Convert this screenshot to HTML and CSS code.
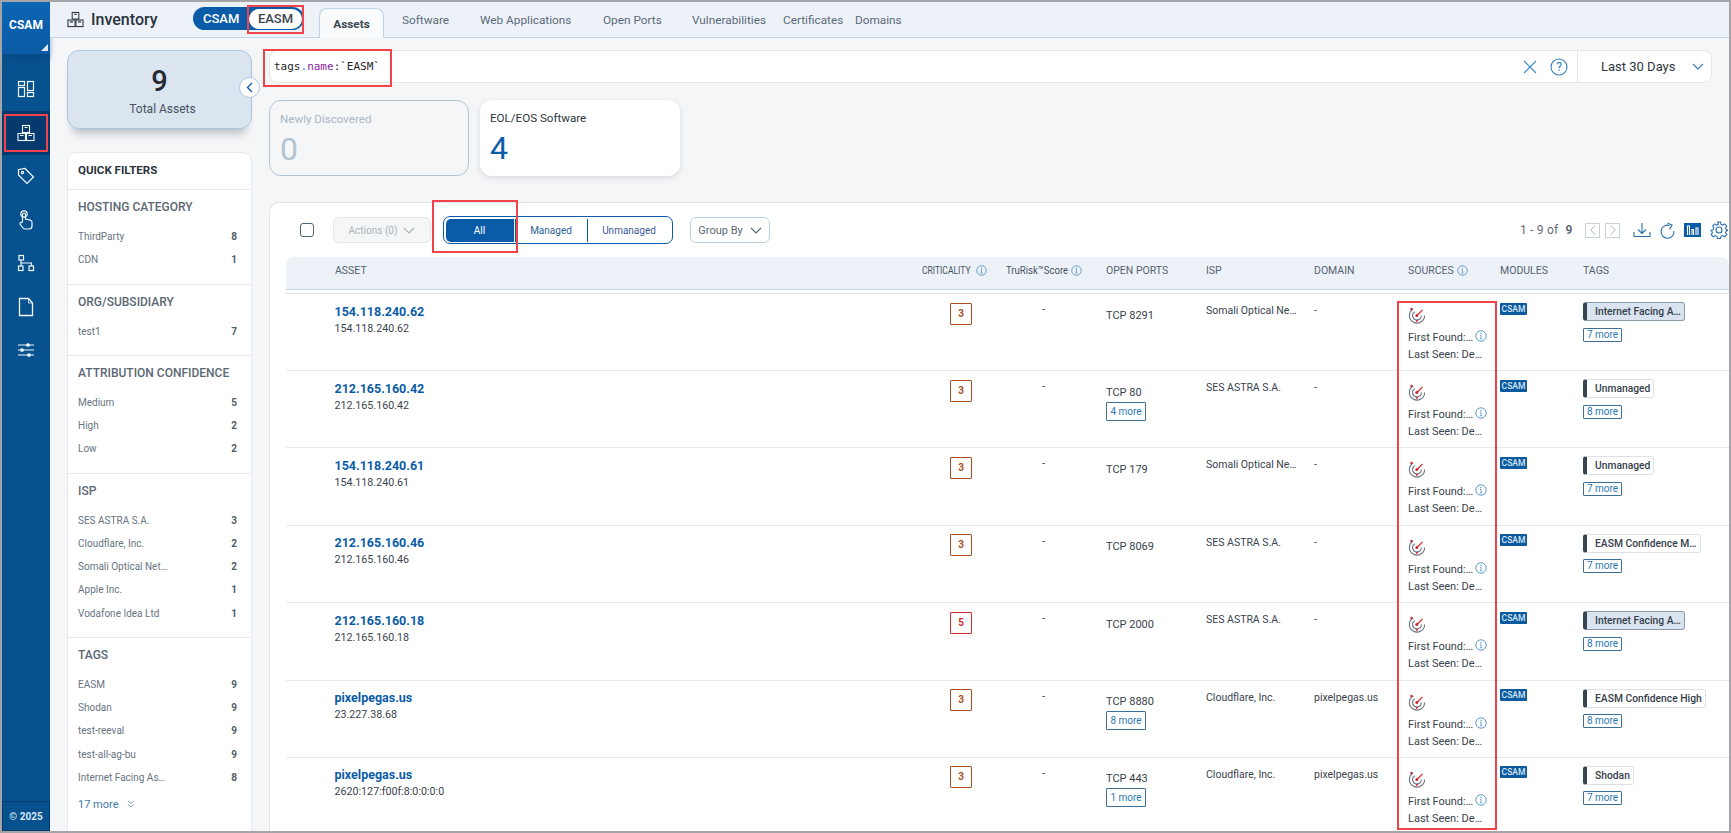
FILE: index.html
```html
<!DOCTYPE html>
<html lang="en">
<head>
<meta charset="utf-8">
<title>Inventory</title>
<link rel="stylesheet" href="styles.css">
</head>
<body>
<svg class="defs" width="0" height="0" aria-hidden="true">
  <symbol id="i-inv" viewBox="0 0 18 18"><g fill="none" stroke="currentColor" stroke-width="1.1"><rect x="5.5" y="1.5" width="7" height="7"/><rect x="1" y="9.5" width="7.5" height="7"/><rect x="9.5" y="9.5" width="7.5" height="7"/><path d="M7.5 3.5h3M3 11.5h3.500M11.500 11.500H15" /></g></symbol>
  <symbol id="i-radar" viewBox="0 0 18 18"><g fill="none" stroke="#6d7680" stroke-width="1.100"><path d="M5.200 2.900A7.600 7.600 0 1 0 16.600 9.500"/><path d="M6.800 5.700A4.400 4.400 0 1 0 13.400 9.500"/></g><path d="M9 9.500 14.500 3.800" stroke="#d8262c" stroke-width="1.200"/><circle cx="8.800" cy="9.500" r="1.500" fill="#d8262c"/><circle cx="3.500" cy="3" r="1.200" fill="#d8262c"/><circle cx="8.800" cy="14.800" r="1.100" fill="#d8262c"/></symbol>
  <symbol id="i-info" viewBox="0 0 12 12"><circle cx="6" cy="6" r="5.200" fill="none" stroke="currentColor"/><path d="M6 5.200v3.400M4.800 8.800h2.400M5 5.200h1" fill="none" stroke="currentColor" stroke-width=".9"/><circle cx="6" cy="3.400" r=".7" fill="currentColor"/></symbol>
  <symbol id="i-down" viewBox="0 0 12 7"><path d="M1 1l5 5 5-5" fill="none" stroke="currentColor" stroke-width="1.100"/></symbol>
</svg>

<div class="app">
  <nav class="rail">
    <div class="brand">CSAM<span class="brand-corner"></span></div>
    <div class="rail-icons">
      <a class="rail-item"><svg width="18" height="18" viewBox="0 0 18 18" fill="none" stroke="currentColor" stroke-width="1.200"><rect x="1.500" y="1.500" width="6" height="4"/><rect x="1.500" y="7.500" width="6" height="9"/><rect x="10.500" y="1.500" width="6" height="9"/><rect x="10.500" y="12.500" width="6" height="4"/></svg></a>
      <a class="rail-item active"><svg width="18" height="18"><use href="#i-inv"/></svg></a>
      <a class="rail-item"><svg width="18" height="18" viewBox="0 0 18 18" fill="none" stroke="currentColor" stroke-width="1.200"><path d="M1.500 2.500 8 1.500 16.500 10 10 16.500 1.500 8Z"/><circle cx="5.500" cy="5.500" r="1.100"/></svg></a>
      <a class="rail-item"><svg width="18" height="20" viewBox="0 0 18 20" fill="none" stroke="currentColor" stroke-width="1.200"><circle cx="7" cy="4" r="3.200"/><path d="M5.500 11V4.500a1.500 1.500 0 0 1 3 0V9l5 1.200c1 .3 1.500 1 1.500 2V16a3 3 0 0 1-3 3H8a3 3 0 0 1-2.500-1.500L3 14c-.6-1 .8-2.300 1.800-1.300Z"/></svg></a>
      <a class="rail-item"><svg width="18" height="18" viewBox="0 0 18 18" fill="none" stroke="currentColor" stroke-width="1.200"><rect x="2" y="1.500" width="4.500" height="4.500"/><rect x="1.500" y="12" width="4.500" height="4.500"/><rect x="12" y="12" width="4.500" height="4.500"/><path d="M4 6v6M4 9h10.500v3"/></svg></a>
      <a class="rail-item"><svg width="18" height="20" viewBox="0 0 18 20" fill="none" stroke="currentColor" stroke-width="1.300"><path d="M2.500 1.500h9l4 4.500v12.500h-13Z"/><path d="M11.500 1.500V6h4" stroke-width=".8"/></svg></a>
      <a class="rail-item"><svg width="18" height="16" viewBox="0 0 18 16" fill="none" stroke="currentColor" stroke-width="1.100"><path d="M1 3h16M1 8h16M1 13h16"/><circle cx="11" cy="3" r="1.300" fill="currentColor"/><circle cx="5" cy="8" r="1.300" fill="currentColor"/><circle cx="12" cy="13" r="1.300" fill="currentColor"/></svg></a>
    </div>
    <div class="rail-foot">© 2025</div>
  </nav>

  <div class="main">
    <header class="topbar">
      <div class="title"><svg width="17" height="17"><use href="#i-inv"/></svg><span>Inventory</span></div>
      <div class="switch"><span class="switch-on">CSAM</span><span class="switch-off">EASM</span></div>
      <div class="tabs">
        <a class="tab tab-active">Assets</a>
        <a class="tab t-soft">Software</a>
        <a class="tab t-web">Web Applications</a>
        <a class="tab t-ports">Open Ports</a>
        <a class="tab t-vuln">Vulnerabilities</a>
        <a class="tab t-cert">Certificates</a>
        <a class="tab t-dom">Domains</a>
      </div>
    </header>

    <div class="content">
      <aside class="side">
        <div class="total">
          <div class="total-num">9</div>
          <div class="total-label">Total Assets</div>
          <button class="collapse"><svg width="7" height="11" viewBox="0 0 7 11"><path d="M6 1 1.500 5.500 6 10" fill="none" stroke="#0b5ca8" stroke-width="1.400"/></svg></button>
        </div>
        <div class="filters">
          <div class="filters-title">QUICK FILTERS</div>
          <section class="fsec">
            <h3>HOSTING CATEGORY</h3>
            <div class="fitem"><span>ThirdParty</span><b>8</b></div>
            <div class="fitem"><span>CDN</span><b>1</b></div>
          </section>
          <section class="fsec">
            <h3>ORG/SUBSIDIARY</h3>
            <div class="fitem"><span>test1</span><b>7</b></div>
          </section>
          <section class="fsec">
            <h3>ATTRIBUTION CONFIDENCE</h3>
            <div class="fitem"><span>Medium</span><b>5</b></div>
            <div class="fitem"><span>High</span><b>2</b></div>
            <div class="fitem"><span>Low</span><b>2</b></div>
          </section>
          <section class="fsec">
            <h3>ISP</h3>
            <div class="fitem"><span>SES ASTRA S.A.</span><b>3</b></div>
            <div class="fitem"><span>Cloudflare, Inc.</span><b>2</b></div>
            <div class="fitem"><span>Somali Optical Net…</span><b>2</b></div>
            <div class="fitem"><span>Apple Inc.</span><b>1</b></div>
            <div class="fitem"><span>Vodafone Idea Ltd</span><b>1</b></div>
          </section>
          <section class="fsec">
            <h3>TAGS</h3>
            <div class="fitem"><span>EASM</span><b>9</b></div>
            <div class="fitem"><span>Shodan</span><b>9</b></div>
            <div class="fitem"><span>test-reeval</span><b>9</b></div>
            <div class="fitem"><span>test-all-ag-bu</span><b>9</b></div>
            <div class="fitem"><span>Internet Facing As…</span><b>8</b></div>
            <div class="fmore">17 more <svg width="8" height="8" viewBox="0 0 8 8"><path d="M1 1l3 2.500L7 1M1 4.500 4 7l3-2.500" fill="none" stroke="#5d87ad" stroke-width=".8"/></svg></div>
          </section>
        </div>
      </aside>

      <div class="work">
        <div class="search">
          <div class="query">tags<i class="q-dot">.</i><i class="q-key">name</i>:`EASM`</div>
          <svg class="q-x" width="14" height="14" viewBox="0 0 14 14"><path d="M1 1l12 12M13 1 1 13" stroke="#3d8ac6" stroke-width="1.100"/></svg>
          <svg class="q-help" width="18" height="18" viewBox="0 0 18 18"><circle cx="9" cy="9" r="8" fill="none" stroke="#2f7dbd" stroke-width="1.100"/><text x="9" y="13" text-anchor="middle" class="q-mark">?</text></svg>
          <div class="range"><span>Last 30 Days</span><svg width="12" height="7" class="range-c"><use href="#i-down"/></svg></div>
        </div>

        <div class="stats">
          <div class="stat stat-off"><div class="stat-label">Newly Discovered</div><div class="stat-num">0</div></div>
          <div class="stat stat-on"><div class="stat-label">EOL/EOS Software</div><div class="stat-num">4</div></div>
        </div>

        <div class="panel">
          <div class="toolbar">
            <span class="check"></span>
            <span class="actions">Actions (0) <svg width="12" height="7"><use href="#i-down"/></svg></span>
            <div class="seg"><span class="seg-a">All</span><span class="seg-m">Managed</span><span class="seg-u">Unmanaged</span></div>
            <span class="group">Group By <svg width="12" height="7"><use href="#i-down"/></svg></span>
            <div class="pager">
              <span class="pg-text">1 - 9 of <b>9</b></span>
              <span class="pg-btn"><svg width="6" height="10" viewBox="0 0 6 10"><path d="M5 .5.800 5 5 9.500" fill="none" stroke="#a9b6c2"/></svg></span>
              <span class="pg-btn"><svg width="6" height="10" viewBox="0 0 6 10"><path d="M1 .5 5.200 5 1 9.500" fill="none" stroke="#a9b6c2"/></svg></span>
              <svg class="pg-dl" width="18" height="16" viewBox="0 0 18 16" fill="none" stroke="#2c6fae" stroke-width="1.100"><path d="M9 1v10M5 7.500 9 11.500l4-4M1 10v4.500h16V10"/></svg>
              <svg class="pg-re" width="17" height="17" viewBox="0 0 17 17" fill="none" stroke="#2c6fae" stroke-width="1.100"><path d="M10.500 3.500A6.500 6.500 0 1 0 15 9"/><path d="M8.500 1 13 3.200 10.500 7.500"/></svg>
              <span class="pg-chart"><svg width="13" height="10" viewBox="0 0 13 10" fill="none" stroke="#fff" stroke-width="1.100"><path d="M1.500 10V1h2v9M6 10V4.500h1.500V10M10 10V3h2v7"/></svg></span>
              <svg class="pg-gear" width="18" height="18" viewBox="0 0 18 18" fill="none" stroke="#2c6fae" stroke-width="1.100"><circle cx="9" cy="9" r="3"/><path d="M7.500 1h3l.5 2.300 1.800.8 2-1.200 2 2.100-1.200 2 .7 1.800 2.200.5v0l-2.200.6-.7 1.800 1.200 2-2 2-2-1.200-1.800.8-.5 2.200h-3l-.5-2.200-1.800-.8-2 1.200-2-2 1.200-2-.7-1.800L1 9.300v0l2.200-.5.700-1.800-1.200-2 2-2.100 2 1.200 1.800-.8Z"/></svg>
            </div>
          </div>

          <div class="thead grid">
            <div class="h h-asset">ASSET</div>
            <div class="h h-crit"><span class="narrow nw-crit">CRITICALITY</span><svg width="11" height="11"><use href="#i-info"/></svg></div>
            <div class="h h-tru"><span class="narrow nw-tru">TruRisk™Score</span><svg width="11" height="11"><use href="#i-info"/></svg></div>
            <div class="h">OPEN PORTS</div>
            <div class="h">ISP</div>
            <div class="h">DOMAIN</div>
            <div class="h">SOURCES <svg width="11" height="11"><use href="#i-info"/></svg></div>
            <div class="h">MODULES</div>
            <div class="h">TAGS</div>
          </div>
          <div class="thead-rule"></div>

          <div class="rows">
            <div class="row grid">
              <div class="c-asset"><a class="name">154.118.240.62</a><div class="ip">154.118.240.62</div></div>
              <div class="c-crit"><span class="sev">3</span></div>
              <div class="c-dash">-</div>
              <div class="c-port"><div>TCP 8291</div></div>
              <div class="c-text">Somali Optical Ne…</div>
              <div class="c-text">-</div>
              <div class="c-src"><svg width="18" height="18"><use href="#i-radar"/></svg><div class="src-l">First Found:… <svg width="12" height="12"><use href="#i-info"/></svg></div><div class="src-l">Last Seen: De…</div></div>
              <div class="c-mod"><span class="mod">CSAM</span></div>
              <div class="c-tag"><span class="chip chip-fill">Internet Facing A…</span><span class="more">7 more</span></div>
            </div>
            <div class="row grid">
              <div class="c-asset"><a class="name">212.165.160.42</a><div class="ip">212.165.160.42</div></div>
              <div class="c-crit"><span class="sev">3</span></div>
              <div class="c-dash">-</div>
              <div class="c-port"><div>TCP 80</div><span class="more">4 more</span></div>
              <div class="c-text">SES ASTRA S.A.</div>
              <div class="c-text">-</div>
              <div class="c-src"><svg width="18" height="18"><use href="#i-radar"/></svg><div class="src-l">First Found:… <svg width="12" height="12"><use href="#i-info"/></svg></div><div class="src-l">Last Seen: De…</div></div>
              <div class="c-mod"><span class="mod">CSAM</span></div>
              <div class="c-tag"><span class="chip">Unmanaged</span><span class="more">8 more</span></div>
            </div>
            <div class="row grid">
              <div class="c-asset"><a class="name">154.118.240.61</a><div class="ip">154.118.240.61</div></div>
              <div class="c-crit"><span class="sev">3</span></div>
              <div class="c-dash">-</div>
              <div class="c-port"><div>TCP 179</div></div>
              <div class="c-text">Somali Optical Ne…</div>
              <div class="c-text">-</div>
              <div class="c-src"><svg width="18" height="18"><use href="#i-radar"/></svg><div class="src-l">First Found:… <svg width="12" height="12"><use href="#i-info"/></svg></div><div class="src-l">Last Seen: De…</div></div>
              <div class="c-mod"><span class="mod">CSAM</span></div>
              <div class="c-tag"><span class="chip">Unmanaged</span><span class="more">7 more</span></div>
            </div>
            <div class="row grid">
              <div class="c-asset"><a class="name">212.165.160.46</a><div class="ip">212.165.160.46</div></div>
              <div class="c-crit"><span class="sev">3</span></div>
              <div class="c-dash">-</div>
              <div class="c-port"><div>TCP 8069</div></div>
              <div class="c-text">SES ASTRA S.A.</div>
              <div class="c-text">-</div>
              <div class="c-src"><svg width="18" height="18"><use href="#i-radar"/></svg><div class="src-l">First Found:… <svg width="12" height="12"><use href="#i-info"/></svg></div><div class="src-l">Last Seen: De…</div></div>
              <div class="c-mod"><span class="mod">CSAM</span></div>
              <div class="c-tag"><span class="chip">EASM Confidence M…</span><span class="more">7 more</span></div>
            </div>
            <div class="row grid">
              <div class="c-asset"><a class="name">212.165.160.18</a><div class="ip">212.165.160.18</div></div>
              <div class="c-crit"><span class="sev sev-high">5</span></div>
              <div class="c-dash">-</div>
              <div class="c-port"><div>TCP 2000</div></div>
              <div class="c-text">SES ASTRA S.A.</div>
              <div class="c-text">-</div>
              <div class="c-src"><svg width="18" height="18"><use href="#i-radar"/></svg><div class="src-l">First Found:… <svg width="12" height="12"><use href="#i-info"/></svg></div><div class="src-l">Last Seen: De…</div></div>
              <div class="c-mod"><span class="mod">CSAM</span></div>
              <div class="c-tag"><span class="chip chip-fill">Internet Facing A…</span><span class="more">8 more</span></div>
            </div>
            <div class="row grid">
              <div class="c-asset"><a class="name">pixelpegas.us</a><div class="ip">23.227.38.68</div></div>
              <div class="c-crit"><span class="sev">3</span></div>
              <div class="c-dash">-</div>
              <div class="c-port"><div>TCP 8880</div><span class="more">8 more</span></div>
              <div class="c-text">Cloudflare, Inc.</div>
              <div class="c-text">pixelpegas.us</div>
              <div class="c-src"><svg width="18" height="18"><use href="#i-radar"/></svg><div class="src-l">First Found:… <svg width="12" height="12"><use href="#i-info"/></svg></div><div class="src-l">Last Seen: De…</div></div>
              <div class="c-mod"><span class="mod">CSAM</span></div>
              <div class="c-tag"><span class="chip">EASM Confidence High</span><span class="more">8 more</span></div>
            </div>
            <div class="row grid">
              <div class="c-asset"><a class="name">pixelpegas.us</a><div class="ip">2620:127:f00f:8:0:0:0:0</div></div>
              <div class="c-crit"><span class="sev">3</span></div>
              <div class="c-dash">-</div>
              <div class="c-port"><div>TCP 443</div><span class="more">1 more</span></div>
              <div class="c-text">Cloudflare, Inc.</div>
              <div class="c-text">pixelpegas.us</div>
              <div class="c-src"><svg width="18" height="18"><use href="#i-radar"/></svg><div class="src-l">First Found:… <svg width="12" height="12"><use href="#i-info"/></svg></div><div class="src-l">Last Seen: De…</div></div>
              <div class="c-mod"><span class="mod">CSAM</span></div>
              <div class="c-tag"><span class="chip">Shodan</span><span class="more">7 more</span></div>
            </div>
          </div>
        </div>
      </div>
    </div>
  </div>
</div>

<div class="mark m-easm"></div>
<div class="mark m-query"></div>
<div class="mark m-nav"></div>
<div class="mark m-all"></div>
<div class="mark m-src"></div>
</body>
</html>
```

FILE: styles.css
```css
* { box-sizing: border-box; }
html, body { margin: 0; height: 100%; overflow: hidden; }
body { position: relative; font-family: Roboto, "Liberation Sans", sans-serif; color: #2b3640; background: #fff; }
.defs { position: absolute; }
a { color: inherit; text-decoration: none; }
i { font-style: normal; }

.app { width: 1731px; height: 833px; border: 2px solid #a3a5a8; display: flex; overflow: hidden; background: #f5f6f8; }

/* left rail */
.rail { width: 48px; flex: none; background: #07518f; color: #fff; display: flex; flex-direction: column; }
.brand { position: relative; height: 52px; flex: none; padding-top: 16px; text-align: center; font-size: 12px; font-weight: 700; background: linear-gradient(180deg, #0c65b4, #0a5ba4); box-shadow: 0 6px 6px -2px #064a84; }
.brand-corner { position: absolute; right: 2px; bottom: 3px; width: 0; height: 0; border-left: 7px solid transparent; border-bottom: 7px solid #dfe9f3; }
.rail-icons { flex: 1; padding-top: 13px; display: flex; flex-direction: column; }
.rail-item { height: 44px; display: flex; align-items: center; justify-content: center; color: #f2f7fc; }
.rail-item svg { display: block; }
.rail-item.active { background: #063a6e; }
.rail-item + .rail-item { margin-top: -0.5px; }
.rail-foot { height: 30px; flex: none; border: 1px solid #063c6e; text-align: center; font-size: 10px; font-weight: 700; line-height: 30px; color: #dbe6f1; }

/* top bar */
.main { flex: 1; min-width: 0; display: flex; flex-direction: column; }
.topbar { position: relative; height: 36px; flex: none; background: #edf2f9; border-bottom: 1px solid #c3d6e8; display: flex; padding-left: 17px; }
.title { display: flex; align-items: center; gap: 7px; width: 126px; height: 34px; color: #29323b; font-size: 16px; font-weight: 500; }
.title svg { flex: none; }
.switch { display: flex; align-items: center; width: 111px; height: 23px; margin-top: 5px; border-radius: 12px; background: #0b5ca8; color: #fff; font-size: 13px; font-weight: 500; padding: 0 1px 0 10px; }
.switch-on { width: 46px; }
.switch-off { width: 53px; height: 20px; margin-left: 0; border-radius: 10px; background: #fff; color: #3b4650; text-align: center; line-height: 20px; }
.tabs { display: flex; margin-left: 15px; height: 36px; font-size: 11.800px; color: #5b6a78; }
.tab { display: block; padding-top: 11px; white-space: nowrap; }
.tab-active { width: 65px; height: 30px; margin-top: 6px; padding-top: 8px; text-align: center; font-weight: 700; color: #3c4650; background: #f8fafc; border: 1px solid #bdd4e8; border-bottom: 0; border-radius: 8px 8px 0 0; }
.t-soft { margin-left: 18px; width: 78px; }
.t-web { width: 123px; }
.t-ports { width: 89px; }
.t-vuln { width: 91px; }
.t-cert { width: 72px; }

/* side column */
.content { flex: 1; display: flex; min-height: 0; }
.side { width: 218px; flex: none; padding: 12px 16px 0 17px; }
.total { position: relative; height: 79px; text-align: center; background: #dbe5f0; border: 1px solid #a9c7e3; border-radius: 12px; box-shadow: 0 10px 10px -6px rgba(60, 70, 85, .35); }
.total-num { margin-top: 14px; font-size: 29px; line-height: 32px; font-weight: 500; color: #252c33; }
.total-label { margin-top: 5px; padding-left: 6px; font-size: 12px; line-height: 14px; color: #46525e; }
.collapse { position: absolute; top: 26px; right: -9px; width: 21px; height: 21px; padding: 0; display: flex; align-items: center; justify-content: center; background: #fff; border: 1px solid #a9c7e3; border-radius: 50%; }
.filters { margin-top: 23px; background: #fff; border: 1px solid #e6eaee; border-radius: 10px 10px 0 0; overflow: hidden; height: 700px; }
.filters-title { height: 36px; padding: 10px 0 0 10px; font-size: 11.500px; line-height: 14px; font-weight: 700; color: #2a333c; }
.fsec { border-top: 1px solid #e6eaee; padding: 8px 14px 12px 10px; }
.fsec h3 { margin: 0 0 9px; height: 18px; font-size: 12px; line-height: 18px; font-weight: 500; color: #5b6874; }
.fitem { display: flex; justify-content: space-between; height: 23.250px; line-height: 23px; font-size: 10px; color: #68747f; }
.fitem b { font-weight: 700; color: #525d68; }
.fmore { margin-top: 8px; font-size: 11px; line-height: 16px; color: #3f7aa8; }
.fmore svg { margin-left: 6px; }

/* work area */
.work { flex: 1; min-width: 0; padding-top: 12px; }
.search { position: relative; display: flex; align-items: center; width: 1443px; height: 33px; margin-left: 1px; background: #fff; border: 1px solid #e3e8ed; border-radius: 8px; }
.query { flex: 1; padding-left: 4px; font-family: "DejaVu Sans Mono", monospace; font-size: 11px; color: #1f2328; }
.q-dot { color: #3c7fb5; }
.q-key { color: #8a1f9e; }
.q-x { margin-right: 13px; }
.q-help { margin-right: 9px; }
.q-mark { font-family: Roboto, sans-serif; font-size: 12px; fill: #2f7dbd; }
.range { display: flex; align-items: center; width: 134px; height: 100%; border-left: 1px solid #e3e8ed; padding-left: 23px; font-size: 13px; color: #2d3740; }
.range-c { margin-left: 17px; color: #2f7dbd; }

.stats { display: flex; gap: 11px; margin-top: 17px; margin-left: 1px; }
.stat { width: 200px; height: 76px; padding: 11px 0 0 10px; border-radius: 12px; }
.stat-off { background: #f5f6f8; border: 1px solid #b4c6d4; color: #aab8c3; }
.stat-on { background: #fff; box-shadow: 0 2px 6px rgba(40, 60, 80, .14); color: #2d3740; }
.stat-label { font-size: 11.600px; line-height: 14px; }
.stat-num { margin-top: 6px; font-size: 32px; line-height: 34px; }
.stat-on .stat-num { color: #0b5ca8; }
.stat-off .stat-num { color: #b3c3cf; }

/* table panel */
.panel { margin: 26px 0 0 1px; height: 640px; background: #fff; border: 1px solid #dfe4ea; border-right: 0; border-radius: 10px 0 0 0; overflow: hidden; }
.toolbar { position: relative; display: flex; align-items: center; height: 54px; padding: 0 0 0 30px; }
.check { width: 14px; height: 14px; border: 1px solid #4f6475; border-radius: 3px; flex: none; }
.actions { display: flex; align-items: center; justify-content: center; gap: 6px; width: 98px; height: 26px; margin-left: 19px; border: 1px solid #e3e7eb; border-radius: 6px; background: #f5f6f8; font-size: 10px; color: #a8b2bb; }
.seg { display: flex; align-items: stretch; width: 230px; height: 28px; margin-left: 12px; padding: 1.500px; border: 1px solid #0b5ca8; border-radius: 7px; font-size: 10px; color: #2a6399; }
.seg span { display: flex; align-items: center; justify-content: center; }
.seg-a { width: 69px; background: #0b5ca8; color: #fff; border-radius: 5px 0 0 5px; border-right: 1px solid #fff; box-shadow: 1px 0 0 #0b5ca8; }
.seg-m { width: 72px; border-right: 1px solid #0b5ca8; margin-left: 1px; }
.seg-u { flex: 1; color: #3d5a9b; }
.group { display: flex; align-items: center; justify-content: center; gap: 7px; width: 80px; height: 26px; margin-left: 17px; border: 1px solid #b8d2e8; border-radius: 6px; font-size: 11px; color: #5d6973; }
.pager { margin-left: auto; display: flex; align-items: center; width: 209px; font-size: 12px; color: #5f6b76; }
.pg-text { width: 65px; letter-spacing: .2px; white-space: nowrap; }
.pg-text b { margin-left: 4px; font-weight: 700; }
.pg-btn { display: flex; align-items: center; justify-content: center; width: 15px; height: 15px; margin-right: 5px; border: 1px solid #c8d2da; }
.pg-dl { margin-left: 8px; }
.pg-re { margin-left: 8px; }
.pg-chart { display: flex; align-items: center; justify-content: center; width: 17px; height: 14px; margin-left: 8px; background: #0b5ca8; }
.pg-gear { margin-left: 9px; }

.grid { display: grid; grid-template-columns: 636px 84px 100px 100px 108px 94px 92px 83px 1fr; }
.thead { margin-left: 16px; height: 33px; padding-bottom: 6px; background: #edf2f9; border-bottom: 1px solid #bcd5ea; border-radius: 8px 8px 0 0; align-items: center; font-size: 10.500px; color: #56636f; }
.h { display: flex; align-items: center; gap: 3px; white-space: nowrap; }
.h svg { color: #5d93bf; flex: none; }
.h-asset { padding-left: 49px; }
.narrow { display: inline-block; font-size: 11.500px; transform-origin: left center; color: #46535f; }
.nw-crit { width: 49px; transform: scaleX(.74); }
.nw-tru { width: 60px; transform: scaleX(.83); }
.h-crit svg, .h-tru svg { margin-left: 2px; }
.thead-rule { margin: 3px 0 0 16px; border-top: 1px solid #e2e6ea; }

.row { margin-left: 16px; height: 77.400px; border-bottom: 1px solid #e6e9ec; align-items: start; font-size: 11px; color: #39434d; }
.row:first-child { height: 77px; }
.c-asset { padding: 8.500px 0 0 48.500px; }
.name { display: block; font-size: 12.500px; line-height: 17px; font-weight: 700; color: #0b5ca8; }
.ip { font-size: 10.700px; line-height: 15px; margin-top: 1px; color: #3a444e; }
.c-crit { padding: 8.500px 0 0 28px; }
.sev { display: block; width: 22px; height: 22px; line-height: 20px; text-align: center; font-size: 10px; font-weight: 700; color: #a94f23; border: 1px solid #a94f23; border-radius: 1px; }
.sev-high { color: #d02b2b; border-color: #d02b2b; }
.c-dash { padding: 9px 0 0 36px; line-height: 14px; }
.c-port { padding-top: 14.500px; line-height: 14px; }
.c-port .more { margin-top: 2px; height: 19px; line-height: 17px; width: 40px; border-color: #3f6f94; }
.c-text { padding-top: 10px; line-height: 14px; white-space: nowrap; font-size: 10.500px; }
.c-src { padding-top: 12px; }
.c-src > svg { display: block; }
.src-l { display: flex; align-items: center; gap: 2px; height: 17px; margin-top: 0; font-size: 11px; white-space: nowrap; line-height: 17px; }
.c-src > svg + .src-l { margin-top: 5px; }
.src-l svg { color: #5d9bce; margin-top: -3px; }
.c-mod { padding-top: 8.500px; }
.mod { display: block; width: 27px; height: 12px; background: #0b5a9e; color: #d9e8f5; font-size: 8.500px; line-height: 12px; text-align: center; font-weight: 500; border-radius: 1px; }
.c-tag { padding-top: 8px; display: flex; flex-direction: column; align-items: flex-start; gap: 6.500px; }
.chip { display: block; height: 19px; padding: 0 3px 0 8px; border: 1px solid #dde2e6; border-left: 4px solid #36454f; border-radius: 3px; font-size: 10.300px; font-weight: 500; line-height: 17px; color: #36414b; background: #fff; white-space: nowrap; }
.chip-fill { background: #d9e4f0; border-color: #8b9aa7; border-left-color: #36454f; }
.more { display: block; width: 39px; height: 14px; line-height: 12px; border: 1px solid #3f6f94; border-radius: 1px; font-size: 10px; text-align: center; color: #2b79b6; }

/* annotation rectangles drawn on the screenshot */
.mark { position: absolute; border: 2px solid #f0444a; pointer-events: none; }
.m-easm { left: 247px; top: 5px; width: 57px; height: 29px; }
.m-query { left: 263px; top: 49px; width: 129px; height: 38px; }
.m-nav { left: 4px; top: 114px; width: 44px; height: 38px; }
.m-all { left: 432px; top: 200px; width: 86px; height: 53px; }
.m-src { left: 1397px; top: 301px; width: 100px; height: 529px; }
```
